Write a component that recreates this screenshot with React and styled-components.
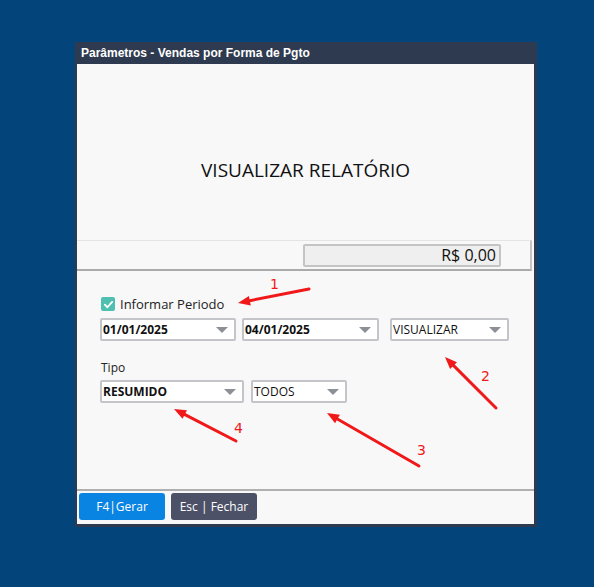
import React from "react";
import styled, { createGlobalStyle } from "styled-components";

const GlobalStyle = createGlobalStyle`
  html, body {
    margin: 0;
    padding: 0;
    background: #03457a;
    width: 594px;
    height: 587px;
    overflow: hidden;
  }
  body {
    font-family: "Open Sans", "Noto Sans", sans-serif;
  }
`;

const Page = styled.div`
  position: relative;
  width: 594px;
  height: 587px;
  padding: 42px 0 0 75px;
  box-sizing: border-box;
`;

const Window = styled.div`
  width: 462px;
  height: 485px;
  box-sizing: border-box;
  background: #2e3a4f;
  border-left: 2px solid #2e3a4f;
  border-right: 3px solid #2e3a4f;
  border-bottom: 3px solid #2e3a4f;
  display: flex;
  flex-direction: column;
`;

const TitleBar = styled.div`
  height: 22px;
  display: flex;
  align-items: center;
  padding-left: 4px;
  color: #ffffff;
  font-family: "Liberation Sans", Arial, sans-serif;
  font-weight: bold;
  font-size: 12px;
`;

const Body = styled.div`
  flex: 1;
  background: #f8f8f8;
  display: flex;
  flex-direction: column;
`;

const Preview = styled.div`
  height: 176px;
  display: flex;
  align-items: center;
  justify-content: center;
  font-size: 19px;
  color: #111;
  padding-top: 36px;
  box-sizing: border-box;
`;

const TotalBar = styled.div`
  height: 31px;
  box-sizing: border-box;
  margin-right: 2px;
  border-top: 1px solid #e4e4e4;
  border-bottom: 2px solid #ababab;
  border-right: 2px solid #c4c4c4;
  display: flex;
  align-items: center;
  justify-content: flex-end;
  padding-right: 29px;
`;

const TotalBox = styled.div`
  width: 198px;
  height: 23px;
  box-sizing: border-box;
  border: 2px solid #c2c4c6;
  border-radius: 2px;
  background: #efefef;
  display: flex;
  align-items: center;
  justify-content: flex-end;
  padding-right: 3px;
  font-size: 16px;
  color: #111;
`;

const Form = styled.div`
  flex: 1;
  padding: 24px 0 0 23px;
  display: flex;
  flex-direction: column;
`;

const CheckRow = styled.label`
  display: flex;
  align-items: center;
  gap: 5px;
  margin-left: 1px;
  height: 18px;
  font-size: 13px;
  color: #222;
`;

const CheckBox = styled.span`
  width: 14px;
  height: 14px;
  border-radius: 2px;
  background: #4fbfaf;
  display: flex;
  align-items: center;
  justify-content: center;
`;

const Row = styled.div`
  display: flex;
  gap: ${(p) => p.$gap || 6}px;
  margin-top: ${(p) => p.$top || 0}px;
`;

const Field = styled.div`
  width: ${(p) => p.$w}px;
  height: 23px;
  box-sizing: border-box;
  border: 2px solid #c3c5c8;
  border-radius: 2px;
  background: #ffffff;
  display: flex;
  align-items: center;
  justify-content: space-between;
  padding: 0 6px 0 1px;
  margin-left: ${(p) => p.$ml || 0}px;
  font-size: 12px;
  font-weight: ${(p) => (p.$bold ? 700 : 400)};
  color: #111;
`;

const Arrow = styled.span`
  width: 0;
  height: 0;
  border-left: 6px solid transparent;
  border-right: 6px solid transparent;
  border-top: 6px solid #8c9096;
`;

const Label = styled.div`
  margin-top: 18px;
  margin-left: 1px;
  font-size: 12px;
  color: #222;
  height: 16px;
`;

const Footer = styled.div`
  border-top: 2px solid #b0b0b0;
  padding: 2px 0 4px 2px;
  display: flex;
  gap: 6px;
`;

const Button = styled.button`
  width: 86px;
  height: 27px;
  border: none;
  border-radius: 3px;
  background: ${(p) => (p.$primary ? "#0a84e2" : "#4c5167")};
  color: #ffffff;
  font-family: "Open Sans", "Noto Sans", sans-serif;
  font-size: 12px;
  padding: 0;
`;

const Notes = styled.svg`
  position: absolute;
  left: 0;
  top: 0;
  width: 594px;
  height: 587px;
  pointer-events: none;
  font-family: "DejaVu Sans", sans-serif;
`;

function Select({ w, bold, ml, children }) {
  return (
    <Field $w={w} $bold={bold} $ml={ml}>
      <span>{children}</span>
      <Arrow />
    </Field>
  );
}

function Note({ x1, y1, x2, y2, n, lx, ly }) {
  const a = Math.atan2(y2 - y1, x2 - x1);
  const len = 13;
  const spread = 0.38;
  const p1 = [x2 - len * Math.cos(a - spread), y2 - len * Math.sin(a - spread)];
  const p2 = [x2 - len * Math.cos(a + spread), y2 - len * Math.sin(a + spread)];
  return (
    <g>
      <line x1={x1} y1={y1} x2={x2 - 8 * Math.cos(a)} y2={y2 - 8 * Math.sin(a)} stroke="#f01818" strokeWidth="3" strokeLinecap="round" />
      <polygon points={`${x2},${y2} ${p1[0]},${p1[1]} ${p2[0]},${p2[1]}`} fill="#f01818" />
      <text x={lx} y={ly} fill="#f01818" fontSize="14">{n}</text>
    </g>
  );
}

export default function App() {
  return (
    <Page>
      <GlobalStyle />
      <Window>
        <TitleBar>Parâmetros - Vendas por Forma de Pgto</TitleBar>
        <Body>
          <Preview>VISUALIZAR RELATÓRIO</Preview>
          <TotalBar>
            <TotalBox>R$ 0,00</TotalBox>
          </TotalBar>
          <Form>
            <CheckRow>
              <CheckBox>
                <svg width="11" height="11" viewBox="0 0 12 12">
                  <path d="M2 6.2 L4.8 9 L10 3.2" fill="none" stroke="#fff" strokeWidth="2" strokeLinecap="round" strokeLinejoin="round" />
                </svg>
              </CheckBox>
              Informar Periodo
            </CheckRow>
            <Row $top={5}>
              <Select w={136} bold>01/01/2025</Select>
              <Select w={137} bold>04/01/2025</Select>
              <Select w={119} ml={5}>VISUALIZAR</Select>
            </Row>
            <Label>Tipo</Label>
            <Row $top={5} $gap={7}>
              <Select w={144} bold>RESUMIDO</Select>
              <Select w={96}>TODOS</Select>
            </Row>
          </Form>
          <Footer>
            <Button $primary>F4|Gerar</Button>
            <Button>Esc | Fechar</Button>
          </Footer>
        </Body>
      </Window>
      <Notes viewBox="0 0 594 587">
        <Note x1={309} y1={289} x2={238} y2={303} n="1" lx={270} ly={289} />
        <Note x1={496} y1={408} x2={445} y2={357} n="2" lx={481} ly={381} />
        <Note x1={419} y1={466} x2={327} y2={413} n="3" lx={417} ly={455} />
        <Note x1={236} y1={441} x2={174} y2={409} n="4" lx={234} ly={433} />
      </Notes>
    </Page>
  );
}
